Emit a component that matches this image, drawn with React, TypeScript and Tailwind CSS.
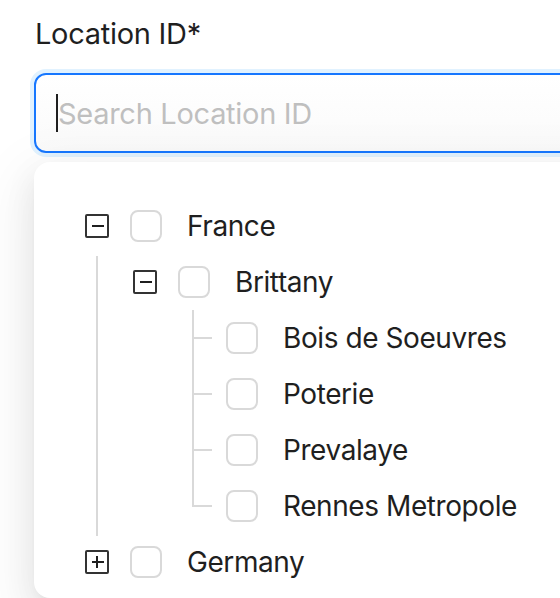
import React from 'react';

type Node = {
  title: string;
  level: number;
  expand?: 'open' | 'closed';
  guides: number[]; // levels with a running vertical guide
  leafLine?: 'mid' | 'last';
};

const ROWS: Node[] = [
  { title: 'France', level: 0, expand: 'open', guides: [] },
  { title: 'Brittany', level: 1, expand: 'open', guides: [0] },
  { title: 'Bois de Soeuvres', level: 2, guides: [0], leafLine: 'mid' },
  { title: 'Poterie', level: 2, guides: [0], leafLine: 'mid' },
  { title: 'Prevalaye', level: 2, guides: [0], leafLine: 'mid' },
  { title: 'Rennes Metropole', level: 2, guides: [0], leafLine: 'last' },
  { title: 'Germany', level: 0, expand: 'closed', guides: [] },
];

const SquareToggle: React.FC<{ open: boolean }> = ({ open }) => (
  <svg width="24" height="24" viewBox="0 0 24 24" fill="none">
    <rect x="1" y="1" width="22" height="22" rx="1" stroke="#333333" strokeWidth="2" />
    <line x1="7" y1="12" x2="19" y2="12" stroke="#1f1f1f" strokeWidth="2" />
    {!open && <line x1="12" y1="6" x2="12" y2="18" stroke="#1f1f1f" strokeWidth="2" />}
  </svg>
);

const TreeRow: React.FC<{ node: Node }> = ({ node }) => {
  const indents = Array.from({ length: node.level });
  return (
    <div className="flex h-[56px] items-center">
      {indents.map((_, i) => (
        <div key={i} className="relative h-full w-[48px] shrink-0">
          {node.guides.includes(i) && (
            <div className="absolute left-[23px] top-[2px] h-full w-[2px] bg-[#d9d9d9]" />
          )}
        </div>
      ))}
      <div className="relative flex h-full w-[48px] shrink-0 items-center justify-center">
        {node.expand ? (
          <SquareToggle open={node.expand === 'open'} />
        ) : (
          <>
            <div
              className={
                node.leafLine === 'last'
                  ? 'absolute left-[23px] top-0 h-1/2 w-[2px] bg-[#d9d9d9]'
                  : 'absolute left-[23px] top-0 h-full w-[2px] bg-[#d9d9d9]'
              }
            />
            <div className="absolute left-[23px] top-[27px] h-[2px] w-[20px] bg-[#d9d9d9]" />
          </>
        )}
      </div>
      <div className="ml-[9px] h-[32px] w-[32px] shrink-0 rounded-[8px] border-2 border-[#d9d9d9] bg-white" />
      <span className="ml-[25px] whitespace-nowrap text-[28px] leading-none tracking-[-0.015em] text-[#1f1f1f]">
        {node.title}
      </span>
    </div>
  );
};

export default function App() {
  return (
    <div
      className="relative flex h-[598px] w-[560px] flex-col overflow-hidden bg-white"
      style={{ fontFamily: 'Inter, "Noto Sans", sans-serif' }}
    >
      <div className="ml-[35px] mt-[14px] h-[40px] text-[29px] leading-[40px] tracking-[-0.01em] text-[#1f1f1f]">
        Location ID*
      </div>

      <div className="ml-[34px] mt-[19px] flex h-[80px] w-[620px] shrink-0 items-center rounded-[12px] border-2 border-[#1677ff] bg-gradient-to-b from-white to-[#fafafa] pl-[20px] shadow-[0_0_0_4px_rgba(5,145,255,0.12)]">
        <div className="h-[38px] w-[2px] bg-[#1f1f1f]" />
        <span className="text-[29px] leading-none tracking-[-0.01em] text-[#bfbfbf]">Search Location ID</span>
      </div>

      <div className="ml-[34px] mt-[9px] w-[620px] flex-1 rounded-[16px] bg-white pl-[39px] pt-[36px] shadow-[0_12px_32px_0_rgba(0,0,0,0.08),0_6px_12px_-8px_rgba(0,0,0,0.12),0_18px_56px_16px_rgba(0,0,0,0.05)]">
        {ROWS.map((n) => (
          <TreeRow key={n.title} node={n} />
        ))}
      </div>
    </div>
  );
}
